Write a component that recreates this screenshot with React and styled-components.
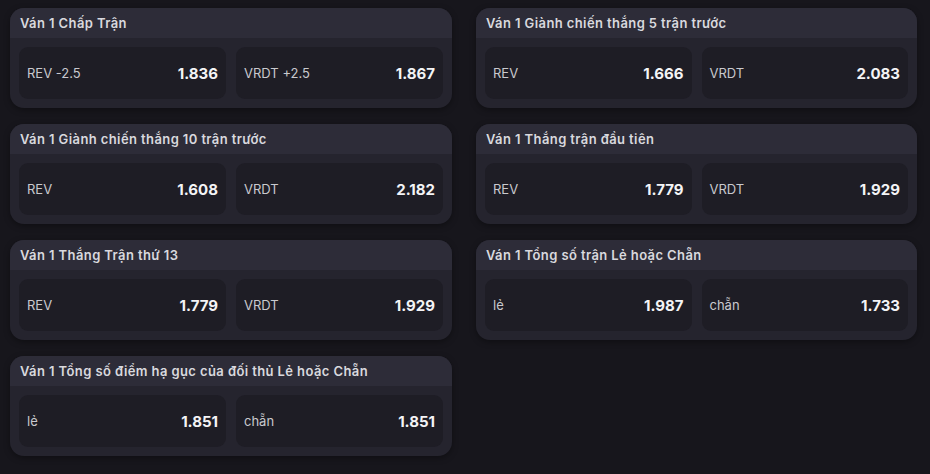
import React from 'react'
import styled, { createGlobalStyle } from 'styled-components'

const GlobalStyle = createGlobalStyle`
    html, body {
        margin: 0;
        padding: 0;
        background: #17161c;
    }
    body {
        font-family: Inter, "Noto Sans", "Liberation Sans", sans-serif;
    }
`

const markets = [
    { title: 'Ván 1 Chấp Trận', options: [['REV -2.5', '1.836'], ['VRDT +2.5', '1.867']] },
    { title: 'Ván 1 Giành chiến thắng 5 trận trước', options: [['REV', '1.666'], ['VRDT', '2.083']] },
    { title: 'Ván 1 Giành chiến thắng 10 trận trước', options: [['REV', '1.608'], ['VRDT', '2.182']] },
    { title: 'Ván 1 Thắng trận đầu tiên', options: [['REV', '1.779'], ['VRDT', '1.929']] },
    { title: 'Ván 1 Thắng Trận thứ 13', options: [['REV', '1.779'], ['VRDT', '1.929']] },
    { title: 'Ván 1 Tổng số trận Lẻ hoặc Chẵn', options: [['lẻ', '1.987'], ['chẵn', '1.733']] },
    { title: 'Ván 1 Tổng số điểm hạ gục của đối thủ Lẻ hoặc Chẵn', options: [['lẻ', '1.851'], ['chẵn', '1.851']] },
]

const Page = styled.div`
    width: 930px;
    height: 474px;
    box-sizing: border-box;
    padding: 8px 13px 0 10px;
    display: grid;
    grid-template-columns: 442px 441px;
    column-gap: 24px;
    row-gap: 16px;
    align-content: start;
`

const Card = styled.div`
    height: 100px;
    border-radius: 14px;
    background: #25242e;
    overflow: hidden;
    display: flex;
    flex-direction: column;
    box-shadow: 0 2px 6px rgba(0, 0, 0, 0.35);
`

const Header = styled.div`
    height: 30px;
    flex-shrink: 0;
    background: #2d2c38;
    display: flex;
    align-items: center;
    padding: 0 10px;
    color: #d9d9de;
    font-size: 13px;
    font-weight: 600;
    letter-spacing: 0.4px;
`

const Options = styled.div`
    flex: 1;
    display: grid;
    grid-template-columns: 1fr 1fr;
    gap: 10px;
    padding: 9px;
`

const Option = styled.div`
    border-radius: 9px;
    background: #1e1d25;
    display: flex;
    align-items: center;
    justify-content: space-between;
    padding: 0 8px;
`

const Label = styled.span`
    color: #c9c9ce;
    font-size: 13px;
`

const Odds = styled.span`
    color: #f4f4f6;
    font-size: 15px;
    font-weight: 700;
`

export default function App() {
    return (
        <>
            <GlobalStyle />
            <Page>
                {markets.map(m => (
                    <Card key={m.title}>
                        <Header>{m.title}</Header>
                        <Options>
                            {m.options.map(([label, odds]) => (
                                <Option key={label}>
                                    <Label>{label}</Label>
                                    <Odds>{odds}</Odds>
                                </Option>
                            ))}
                        </Options>
                    </Card>
                ))}
            </Page>
        </>
    )
}
